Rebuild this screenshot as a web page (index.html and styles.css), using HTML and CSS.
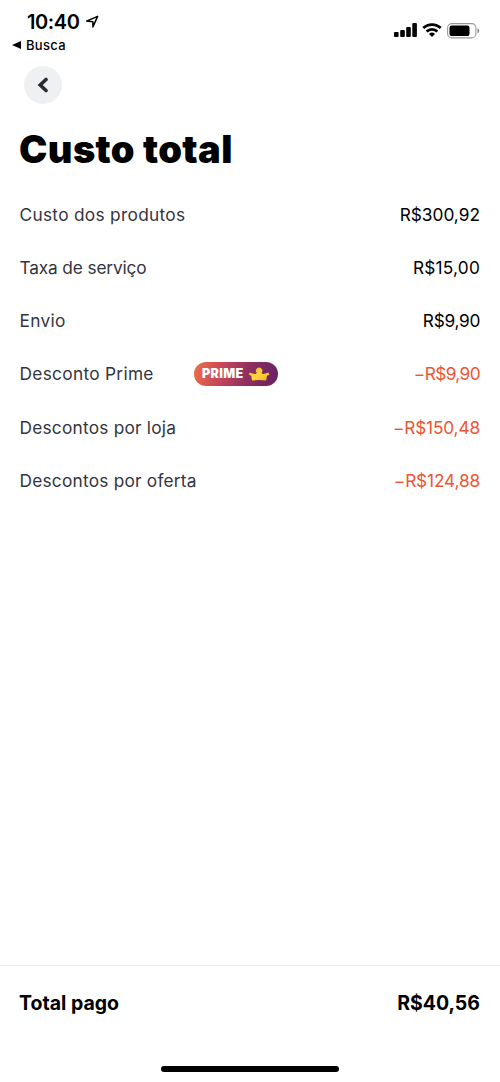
FILE: index.html
```html
<!DOCTYPE html>
<html lang="pt-BR">
<head>
<meta charset="utf-8">
<meta name="viewport" content="width=device-width, initial-scale=1">
<title>Custo total</title>
<link rel="stylesheet" href="styles.css">
</head>
<body>
<div class="screen">
  <header class="status">
    <div class="status-left">
      <div class="clock"><span class="time">10:40</span>
        <svg class="location" viewBox="0 0 14 14" width="14" height="14"><path d="M12.6 1.4 7.9 12V6.7L1.6 6.1Z" fill="none" stroke="#000" stroke-width="1.5" stroke-linejoin="round"/></svg>
      </div>
      <div class="return"><svg viewBox="0 0 9 8" width="9" height="8"><path d="M0 4 9 0V8Z"/></svg><span>Busca</span></div>
    </div>
    <div class="status-right">
      <svg viewBox="0 0 23 14" width="23" height="14"><rect x="0" y="9" width="4.6" height="5" rx="1"/><rect x="6.2" y="7" width="4.6" height="7" rx="1"/><rect x="12.2" y="4" width="4.6" height="10" rx="1"/><rect x="18.3" y="0" width="4.6" height="14" rx="1"/></svg>
      <svg viewBox="0 0 20 14" width="20" height="14"><g fill="none" stroke="#000" stroke-width="2.8"><path d="M1.3 5.1a12.4 12.4 0 0 1 17.4 0"/><path d="M4.6 8.6a7.7 7.7 0 0 1 10.8 0"/></g><path d="M10 14 7 11a4.3 4.3 0 0 1 6 0Z"/></svg>
      <svg viewBox="0 0 33 16" width="33" height="16"><rect x=".6" y=".6" width="28.3" height="14.3" rx="4.2" fill="none" stroke="#999" stroke-width="1.1"/><rect x="2.5" y="2.5" width="20" height="10.6" rx="2.2"/><path d="M30.5 5.2q1.8.8 1.8 2.6t-1.8 2.6Z" fill="#888"/></svg>
    </div>
  </header>
  <button class="back" aria-label="Voltar"><svg viewBox="0 0 12 16" width="12" height="16"><path d="M9 2.5 3.2 8 9 13.5" fill="none" stroke="#2b2b38" stroke-width="3.6" stroke-linecap="round" stroke-linejoin="miter"/></svg></button>
  <h1 class="title">Custo total</h1>
  <main class="costs">
    <div class="row"><span class="label">Custo dos produtos</span><span class="value long">R$300,92</span></div>
    <div class="row"><span class="label tight">Taxa de serviço</span><span class="value">R$15,00</span></div>
    <div class="row"><span class="label">Envio</span><span class="value nines">R$9,90</span></div>
    <div class="row"><span class="label prime-label">Desconto Prime</span>
      <span class="badge"><span class="badge-text">PRIME</span>
        <svg viewBox="0 0 22 14" width="22" height="14"><defs><linearGradient id="gold" x2="1" y2="1"><stop stop-color="#e9ad20"/><stop offset=".5" stop-color="#ffd83d"/><stop offset="1" stop-color="#efb01c"/></linearGradient></defs><path d="M4 13.5 3.2 8.8.7 7.4 1.8 5.4l3 1.1q2.6 1.1 4-.5A3.2 3.2 0 1 1 13.4 6q1.4 1.6 4 .5l3-1.1 1.1 2-2.5 1.4L18.2 13.5Q11.1 12.6 4 13.5Z" fill="url(#gold)"/></svg>
      </span>
      <span class="value discount nines">−R$9,90</span></div>
    <div class="row"><span class="label loja">Descontos por loja</span><span class="value discount">−R$150,48</span></div>
    <div class="row"><span class="label loja">Descontos por oferta</span><span class="value discount">−R$124,88</span></div>
  </main>
  <footer class="total"><span class="total-label">Total pago</span><span class="total-value">R$40,56</span></footer>
  <div class="home"></div>
</div>
</body>
</html>
```
FILE: styles.css
```css
* { box-sizing: border-box; }
body { margin: 0; background: #fff; color: #000; font-family: Inter, "Liberation Sans", sans-serif; }
svg { display: block; flex: none; }
.screen { width: 500px; height: 1082px; display: flex; flex-direction: column; overflow: hidden; }
.status { height: 65.5px; flex: none; padding: 9px 20px 0 12px; display: flex; justify-content: space-between; }
.clock { display: flex; align-items: center; gap: 5px; padding-left: 15px; height: 26px; }
.time { font-size: 20px; font-weight: 600; letter-spacing: -.4px; }
.return { display: flex; align-items: center; gap: 5px; height: 20px; font-size: 13px; font-weight: 500; letter-spacing: .3px; }
.status-right { display: flex; gap: 5px; padding-top: 14px; height: 30px; }
.back { width: 38px; height: 38px; margin-left: 24.4px; padding: 0; border: 0; border-radius: 50%; background: #eff0f2; display: flex; align-items: center; justify-content: center; flex: none; }
.title { margin: 22.5px 0 0 19px; height: 46px; line-height: 46px; font-size: 38px; font-weight: 900; letter-spacing: .4px; white-space: nowrap; }
.costs { padding: 16px 20px 0 19.5px; flex: 1; }
.row { display: flex; align-items: center; height: 53.15px; font-size: 17.3px; }
.label { color: #343440; letter-spacing: .3px; }
.tight { letter-spacing: -.15px; }
.loja { letter-spacing: .22px; }
.prime-label { width: 174.5px; }
.value { margin-left: auto; letter-spacing: .2px; }
.long { letter-spacing: 0; }
.nines { letter-spacing: -.3px; }
.discount { color: #ef5533; letter-spacing: -.15px; }
.discount.nines { letter-spacing: -.6px; }
.badge { width: 84px; height: 24px; border-radius: 12px; padding-left: 8px; display: flex; align-items: center; gap: 4px; background: linear-gradient(105deg, #ed7148 0%, #bd415a 38%, #90305f 62%, #652066 100%); }
.badge-text { color: #fff; font-size: 12.5px; font-weight: 900; letter-spacing: .35px; }
.total { height: 75px; flex: none; border-top: 1px solid #ebebeb; padding: 0 20px 0 19px; display: flex; justify-content: space-between; align-items: center; font-size: 19.5px; font-weight: 700; }
.home { width: 178px; height: 6px; border-radius: 3px; background: #000; margin: 26px 0 10px 161px; flex: none; }
```
